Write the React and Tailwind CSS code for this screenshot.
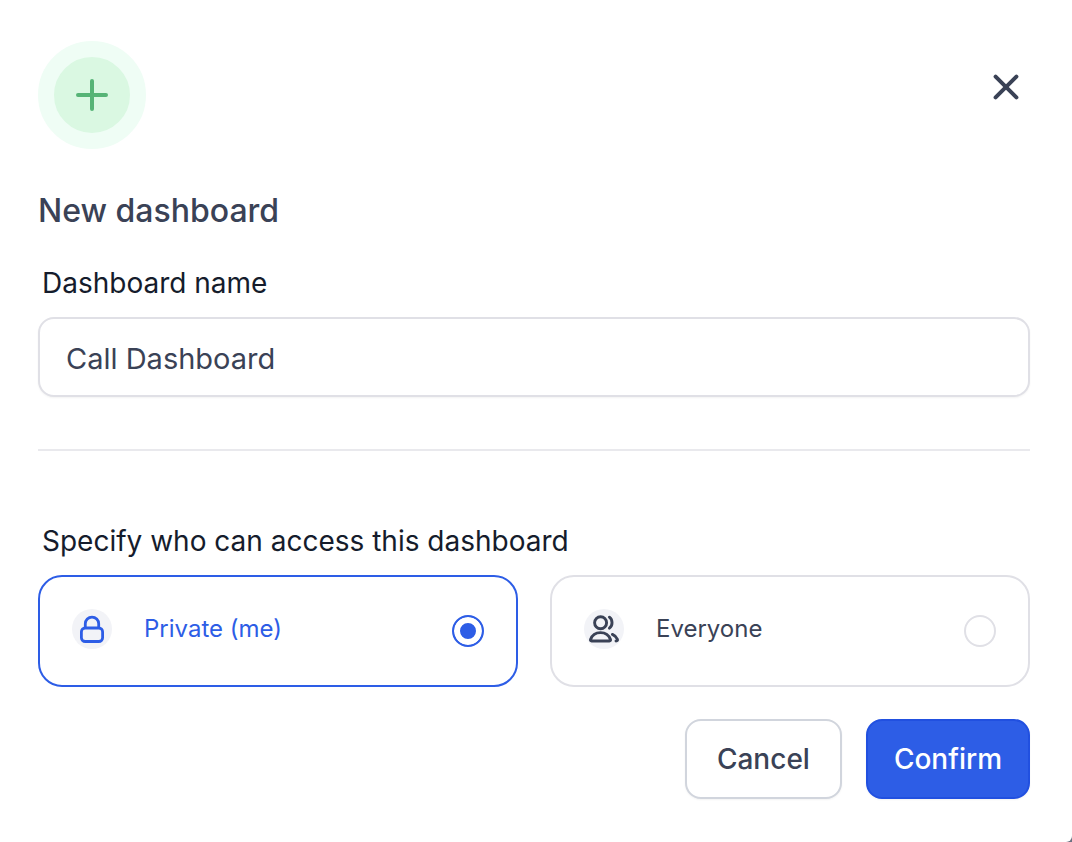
import React, { useState } from "react";

const PlusIcon = () => (
    <svg className="w-8 h-8" viewBox="0 0 32 32" fill="none" stroke="currentColor" strokeWidth="4" strokeLinecap="round" aria-hidden="true">
        <path d="M16 2v28M2 16h28" />
    </svg>
);

const CloseIcon = () => (
    <svg className="w-7 h-7" viewBox="0 0 28 28" fill="none" stroke="currentColor" strokeWidth="4" strokeLinecap="round" aria-hidden="true">
        <path d="M3.600 3.600l20.800 20.800M24.400 3.600L3.600 24.400" />
    </svg>
);

const LockIcon = () => (
    <svg className="w-10 h-10" viewBox="0 0 40 40" fill="none" stroke="currentColor" strokeWidth="2.800" aria-hidden="true">
        <rect x="9.400" y="19" width="21.200" height="13.500" rx="3.800" />
        <path d="M13.300 19v-4.200a6.700 6.700 0 0 1 13.400 0V19" />
    </svg>
);

const UsersIcon = () => (
    <svg className="w-10 h-10" viewBox="0 0 40 40" fill="none" stroke="currentColor" strokeWidth="2.900" strokeLinecap="round" strokeLinejoin="round" aria-hidden="true">
        <circle cx="16.600" cy="13.700" r="6" />
        <path d="M25.400 8.200c3.500 2.600 3.500 8.400 0 11" />
        <path d="M7.600 32h17.800c1 0 1.400-.7 1-1.600-1.400-4-5.200-6.800-9.900-6.800s-8.500 2.800-9.900 6.800c-.4.9 0 1.600 1 1.600z" />
        <path d="M28.400 25.400c2.300 1 4.100 2.600 5 4.800.4 1 0 1.800-1.400 1.800" />
    </svg>
);

const OPTIONS = [
    { value: "private", label: "Private (me)", Icon: LockIcon },
    { value: "everyone", label: "Everyone", Icon: UsersIcon },
];

function App() {
    const [name, setName] = useState("Call Dashboard");
    const [access, setAccess] = useState("private");

    return (
        <div className="min-h-screen bg-gray-500 font-['Inter',sans-serif]">
            <form
                role="dialog"
                aria-labelledby="dialog-title"
                className="min-h-screen bg-white rounded-br-md pl-[38px] pr-[42px] pt-[41px] pb-[43px]"
                onSubmit={(e) => e.preventDefault()}
            >
                {/* Header */}
                <div className="flex items-start justify-between">
                    <div className="w-[108px] h-[108px] rounded-full border-16 border-[#effdf5] bg-[#daf8e2] text-[#56b476] flex items-center justify-center">
                        <PlusIcon />
                    </div>
                    <button type="button" aria-label="Close" className="p-2.5 mt-[22px] text-[#3a4256]">
                        <CloseIcon />
                    </button>
                </div>
                <h2 id="dialog-title" className="mt-[38px] text-[32px] leading-[48px] font-medium text-[#3a4256]">
                    New dashboard
                </h2>

                {/* Name */}
                <label htmlFor="dashboard-name" className="block mt-7 pl-1 text-[28px] leading-10 text-[#151c2c]">
                    Dashboard name
                </label>
                <input
                    id="dashboard-name"
                    type="text"
                    value={name}
                    onChange={(e) => setName(e.target.value)}
                    className="block w-full h-20 mt-3.5 px-[26px] pt-0.5 rounded-2xl border-2 border-[#e0e0e6] bg-white text-[29px] text-[#3a4256] shadow-xs outline-none"
                />

                <hr className="mt-[52px] border-t-2 border-[#e9e9ed]" />

                {/* Access */}
                <fieldset className="mt-[70px]">
                    <legend className="pl-1 text-[28px] leading-10 text-[#151c2c]">Specify who can access this dashboard</legend>
                    <div className="grid grid-cols-2 gap-8 mt-3.5">
                        {OPTIONS.map(({ value, label, Icon }) => (
                            <label
                                key={value}
                                className="flex items-start h-28 px-8 pt-8 rounded-3xl border-2 border-[#e0e0e6] text-[#3a4256] cursor-pointer has-checked:border-[#2d5de6] has-checked:text-[#2d5de6]"
                            >
                                <span className="w-10 h-10 rounded-full bg-[#f2f3f7]">
                                    <Icon />
                                </span>
                                <span className="flex-1 ml-8 text-[24px] leading-10">{label}</span>
                                <input
                                    type="radio"
                                    name="access"
                                    value={value}
                                    checked={access === value}
                                    onChange={() => setAccess(value)}
                                    className="appearance-none w-8 h-8 mt-1.5 rounded-full border-2 border-[#e0e0e6] bg-white checked:border-[#2d5de6] checked:bg-[#2d5de6] checked:shadow-[inset_0_0_0_6px_white]"
                                />
                            </label>
                        ))}
                    </div>
                </fieldset>

                {/* Actions */}
                <div className="flex justify-end gap-6 mt-8 text-[28px] leading-10 font-medium">
                    <button type="button" className="h-20 px-[30px] rounded-2xl border-2 border-[#d1d5dd] bg-white text-[#3a4256] shadow-xs">
                        Cancel
                    </button>
                    <button type="submit" className="h-20 px-[26px] rounded-2xl border-2 border-[#2150e0] bg-[#2d5de6] text-white shadow-xs">
                        Confirm
                    </button>
                </div>
            </form>
        </div>
    );
}

export default App;
